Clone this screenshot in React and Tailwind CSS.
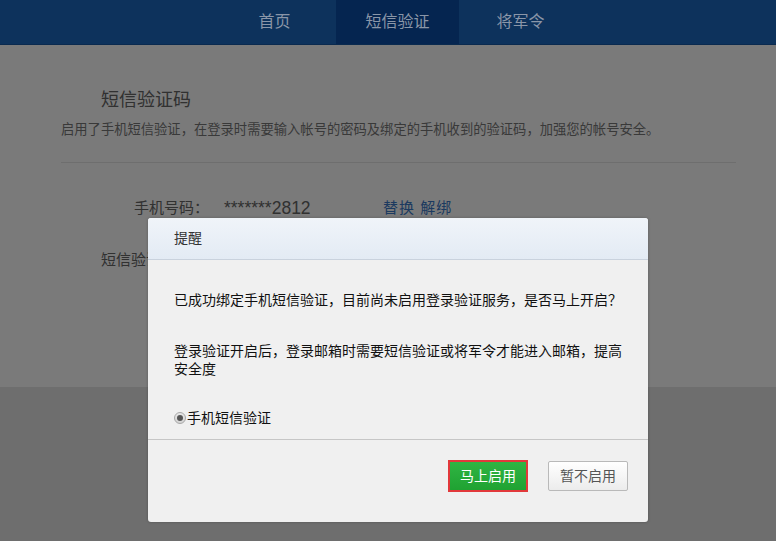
import React from 'react';

const font = { fontFamily: '"Liberation Sans", "Noto Sans CJK SC", sans-serif' };

function Nav() {
  const tabs = ['首页', '短信验证', '将军令'];
  return (
    <div className="h-[45px] bg-[#0d325c] border-b border-[#0a2a4f] flex">
      <div className="ml-[213px] flex">
        {tabs.map((t, i) => (
          <div key={t} className={'w-[123px] h-[44px] flex items-center justify-center text-[16px] text-[#8a96a8] ' + (i === 1 ? 'bg-[#052550]' : '')}>
            {t}
          </div>
        ))}
      </div>
    </div>
  );
}

function Page() {
  return (
    <div className="bg-white h-[342px]">
      <div className="ml-[61px] w-[675px] pt-[43px]">
        <div className="pl-[40px] text-[18px] leading-[24px] text-[#666]">短信验证码</div>
        <div className="mt-[9px] text-[13.3px] leading-[18px] text-[#777] whitespace-nowrap">启用了手机短信验证，在登录时需要输入帐号的密码及绑定的手机收到的验证码，加强您的帐号安全。</div>
        <div className="mt-[23px] border-t border-[#e6e6e6]" />
        <div className="mt-[35px] flex items-center text-[15px] leading-[20px] text-[#666]">
          <div className="w-[148px] text-right">手机号码：</div>
          <div className="ml-[15px] w-[159px] text-[17.5px]">*******2812</div>
          <div className="text-[#3b79c8] tracking-[1px]">替换 解绑</div>
        </div>
        <div className="mt-[32px] flex items-center text-[15px] leading-[20px] text-[#666]">
          <div className="w-[145px] text-right whitespace-nowrap">短信验证登录：</div>
        </div>
      </div>
    </div>
  );
}

function Dialog() {
  return (
    <div className="absolute left-[148px] top-[218px] w-[500px] h-[304px] rounded-[3px] bg-[#f0f0f0] overflow-hidden shadow-[0_0_3px_rgba(0,0,0,0.25)]">
      <div className="h-[42px] bg-gradient-to-b from-[#f0f4f9] to-[#e3ebf4] border-b border-[#c9d2dd] flex items-center pl-[26px] text-[14px] text-[#333]">
        提醒
      </div>
      <div className="pl-[26px] pr-[24px] pt-[31px] pb-[12px] text-[14px] leading-[18px] text-[#111] border-b border-[#c6c6c6]">
        <p>已成功绑定手机短信验证，目前尚未启用登录验证服务，是否马上开启？</p>
        <p className="mt-[33px]">登录验证开启后，登录邮箱时需要短信验证或将军令才能进入邮箱，提高安全度</p>
        <label className="mt-[31px] flex items-center">
          <span className="w-[12px] h-[12px] rounded-full border border-[#a8a8a8] bg-gradient-to-b from-[#e8e8e8] to-[#d4d4d4] flex items-center justify-center">
            <span className="w-[6px] h-[6px] rounded-full bg-[#555]" />
          </span>
          <span className="ml-[1px]">手机短信验证</span>
        </label>
      </div>
      <div className="flex justify-end items-center gap-[20px] pt-[20px] pr-[20px]">
        <button className="w-[80px] h-[32px] border-2 border-[#e2393b] bg-gradient-to-b from-[#2fb543] to-[#1fa232] text-white text-[14px]">马上启用</button>
        <button className="w-[80px] h-[30px] border border-[#b9b9b9] rounded-[2px] bg-gradient-to-b from-white to-[#ececec] text-[#555] text-[14px]">暂不启用</button>
      </div>
    </div>
  );
}

export default function App() {
  return (
    <div className="relative w-[776px] h-[541px] overflow-hidden bg-[#e6e6e6]" style={font}>
      <Nav />
      <Page />
      <div className="absolute left-0 right-0 top-[45px] bottom-0 bg-black/[0.52]" />
      <Dialog />
    </div>
  );
}
